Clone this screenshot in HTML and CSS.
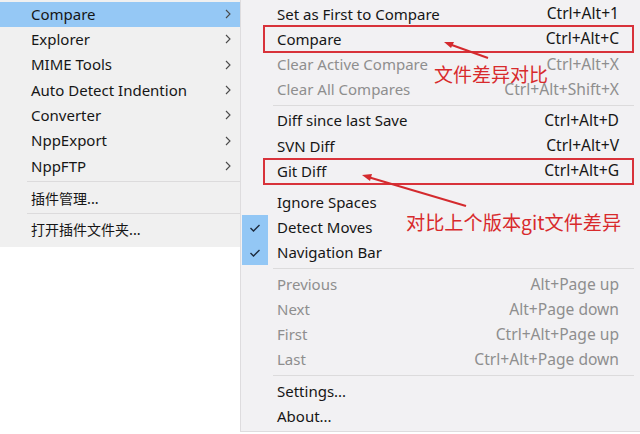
FILE: index.html
```html
<!DOCTYPE html>
<html>
<head>
<meta charset="utf-8">
<link rel="stylesheet" href="styles.css">
</head>
<body>
<div class="stage">
  <div class="menu left">
    <div class="item hot"><span class="lbl">Compare</span><svg class="chev" viewBox="0 0 8 12"><polyline points="2,2 6,6 2,10"/></svg></div>
    <div class="item"><span class="lbl">Explorer</span><svg class="chev" viewBox="0 0 8 12"><polyline points="2,2 6,6 2,10"/></svg></div>
    <div class="item"><span class="lbl">MIME Tools</span><svg class="chev" viewBox="0 0 8 12"><polyline points="2,2 6,6 2,10"/></svg></div>
    <div class="item"><span class="lbl">Auto Detect Indention</span><svg class="chev" viewBox="0 0 8 12"><polyline points="2,2 6,6 2,10"/></svg></div>
    <div class="item"><span class="lbl">Converter</span><svg class="chev" viewBox="0 0 8 12"><polyline points="2,2 6,6 2,10"/></svg></div>
    <div class="item"><span class="lbl">NppExport</span><svg class="chev" viewBox="0 0 8 12"><polyline points="2,2 6,6 2,10"/></svg></div>
    <div class="item"><span class="lbl">NppFTP</span><svg class="chev" viewBox="0 0 8 12"><polyline points="2,2 6,6 2,10"/></svg></div>
    <div class="sep"></div>
    <div class="item"><span class="lbl cjk">插件管理...</span></div>
    <div class="sep"></div>
    <div class="item"><span class="lbl cjk">打开插件文件夹...</span></div>
  </div>

  <div class="menu right">
    <div class="item"><span class="chk"></span><span class="lbl">Set as First to Compare</span><span class="key">Ctrl+Alt+1</span></div>
    <div class="item"><span class="chk"></span><span class="lbl">Compare</span><span class="key">Ctrl+Alt+C</span></div>
    <div class="item dis"><span class="chk"></span><span class="lbl">Clear Active Compare</span><span class="key">Ctrl+Alt+X</span></div>
    <div class="item dis"><span class="chk"></span><span class="lbl">Clear All Compares</span><span class="key">Ctrl+Alt+Shift+X</span></div>
    <div class="sep"></div>
    <div class="item"><span class="chk"></span><span class="lbl">Diff since last Save</span><span class="key">Ctrl+Alt+D</span></div>
    <div class="item"><span class="chk"></span><span class="lbl">SVN Diff</span><span class="key">Ctrl+Alt+V</span></div>
    <div class="item"><span class="chk"></span><span class="lbl">Git Diff</span><span class="key">Ctrl+Alt+G</span></div>
    <div class="sep blank"></div>
    <div class="item"><span class="chk"></span><span class="lbl">Ignore Spaces</span><span class="key"></span></div>
    <div class="item checked"><span class="chk"><svg viewBox="0 0 12 10"><polyline points="1.5,5 4.5,8 10.5,2"/></svg></span><span class="lbl">Detect Moves</span><span class="key"></span></div>
    <div class="item checked"><span class="chk"><svg viewBox="0 0 12 10"><polyline points="1.5,5 4.5,8 10.5,2"/></svg></span><span class="lbl">Navigation Bar</span><span class="key"></span></div>
    <div class="sep"></div>
    <div class="item dis"><span class="chk"></span><span class="lbl">Previous</span><span class="key">Alt+Page up</span></div>
    <div class="item dis"><span class="chk"></span><span class="lbl">Next</span><span class="key">Alt+Page down</span></div>
    <div class="item dis"><span class="chk"></span><span class="lbl">First</span><span class="key">Ctrl+Alt+Page up</span></div>
    <div class="item dis"><span class="chk"></span><span class="lbl">Last</span><span class="key">Ctrl+Alt+Page down</span></div>
    <div class="sep"></div>
    <div class="item"><span class="chk"></span><span class="lbl">Settings...</span><span class="key"></span></div>
    <div class="item"><span class="chk"></span><span class="lbl">About...</span><span class="key"></span></div>
  </div>

  <svg class="marks" viewBox="0 0 640 434" width="640" height="434">
    <rect x="264" y="26" width="369" height="26" />
    <rect x="264" y="159" width="369" height="25" />
    <line x1="488" y1="58" x2="449" y2="44" />
    <polygon class="head" points="444,42 454,42 451,48" />
    <line x1="466" y1="206" x2="368" y2="177" />
    <polygon class="head" points="362,175 372,174 370,181" />
  </svg>
  <div class="note n1">文件差异对比</div>
  <div class="note n2">对比上个版本git文件差异</div>
</div>
</body>
</html>
```

FILE: styles.css
```css
html, body {
  margin: 0;
  padding: 0;
  background: #ffffff;
}
.stage {
  position: relative;
  width: 640px;
  height: 434px;
  overflow: hidden;
  display: flex;
  align-items: flex-start;
  font-family: "Noto Sans", "Noto Sans CJK SC", sans-serif;
  font-size: 15px;
  color: #161616;
}
.menu {
  display: flex;
  flex-direction: column;
  box-sizing: border-box;
}
.left {
  width: 240px;
  background: #f0f0f0;
  padding: 1.5px 0 5px 0;
}
.right {
  width: 400px;
  height: 432px;
  background: #f2f1f3;
  border-left: 1px solid #dedcde;
  border-bottom: 1px solid #dedcde;
  padding: 1.5px 0 2px 0;
}
.item {
  height: 25.33px;
  display: flex;
  align-items: center;
  white-space: nowrap;
}
.left .item {
  padding-left: 31px;
  padding-right: 8px;
}
.left .item.hot {
  background: #95c8f5;
}
.lbl {
  flex: 1;
  line-height: 1;
}
.cjk {
  font-family: "Noto Sans CJK SC", sans-serif;
  font-size: 14px;
}
.chev {
  width: 8px;
  height: 12px;
  fill: none;
  stroke: #4a4a4a;
  stroke-width: 1.1;
}
.sep {
  height: 6.33px;
  display: flex;
  align-items: center;
}
.sep::after {
  content: "";
  flex: 1;
  height: 1px;
  background: #dcdbdc;
}
.left .sep {
  padding-left: 27px;
}
.right .sep {
  padding-left: 32px;
  padding-right: 6px;
}
.right .sep.blank::after {
  background: transparent;
}
.right .item {
  padding-right: 21px;
}
.chk {
  width: 26px;
  height: 100%;
  margin-left: 1px;
  margin-right: 9px;
  display: flex;
  align-items: center;
  justify-content: center;
}
.checked .chk {
  background: #93c7f5;
}
.chk svg {
  width: 12px;
  height: 10px;
  fill: none;
  stroke: #1d2b3e;
  stroke-width: 1.4;
}
.key {
  text-align: right;
  font-size: 15.6px;
  line-height: 1;
}
.dis {
  color: #8e8e8e;
}
.marks {
  position: absolute;
  left: 0;
  top: 0;
}
.marks rect {
  fill: none;
  stroke: #d8323a;
  stroke-width: 2;
}
.marks line {
  stroke: #d42a2e;
  stroke-width: 2;
}
.marks .head {
  fill: #d42a2e;
}
.note {
  position: absolute;
  color: #d82a2c;
  font-family: "Noto Sans CJK SC", "Noto Sans", sans-serif;
  line-height: 1;
  white-space: nowrap;
}
.n1 {
  left: 434px;
  top: 64px;
  font-size: 19px;
}
.n2 {
  left: 406px;
  top: 213px;
  font-size: 19.2px;
}
```
